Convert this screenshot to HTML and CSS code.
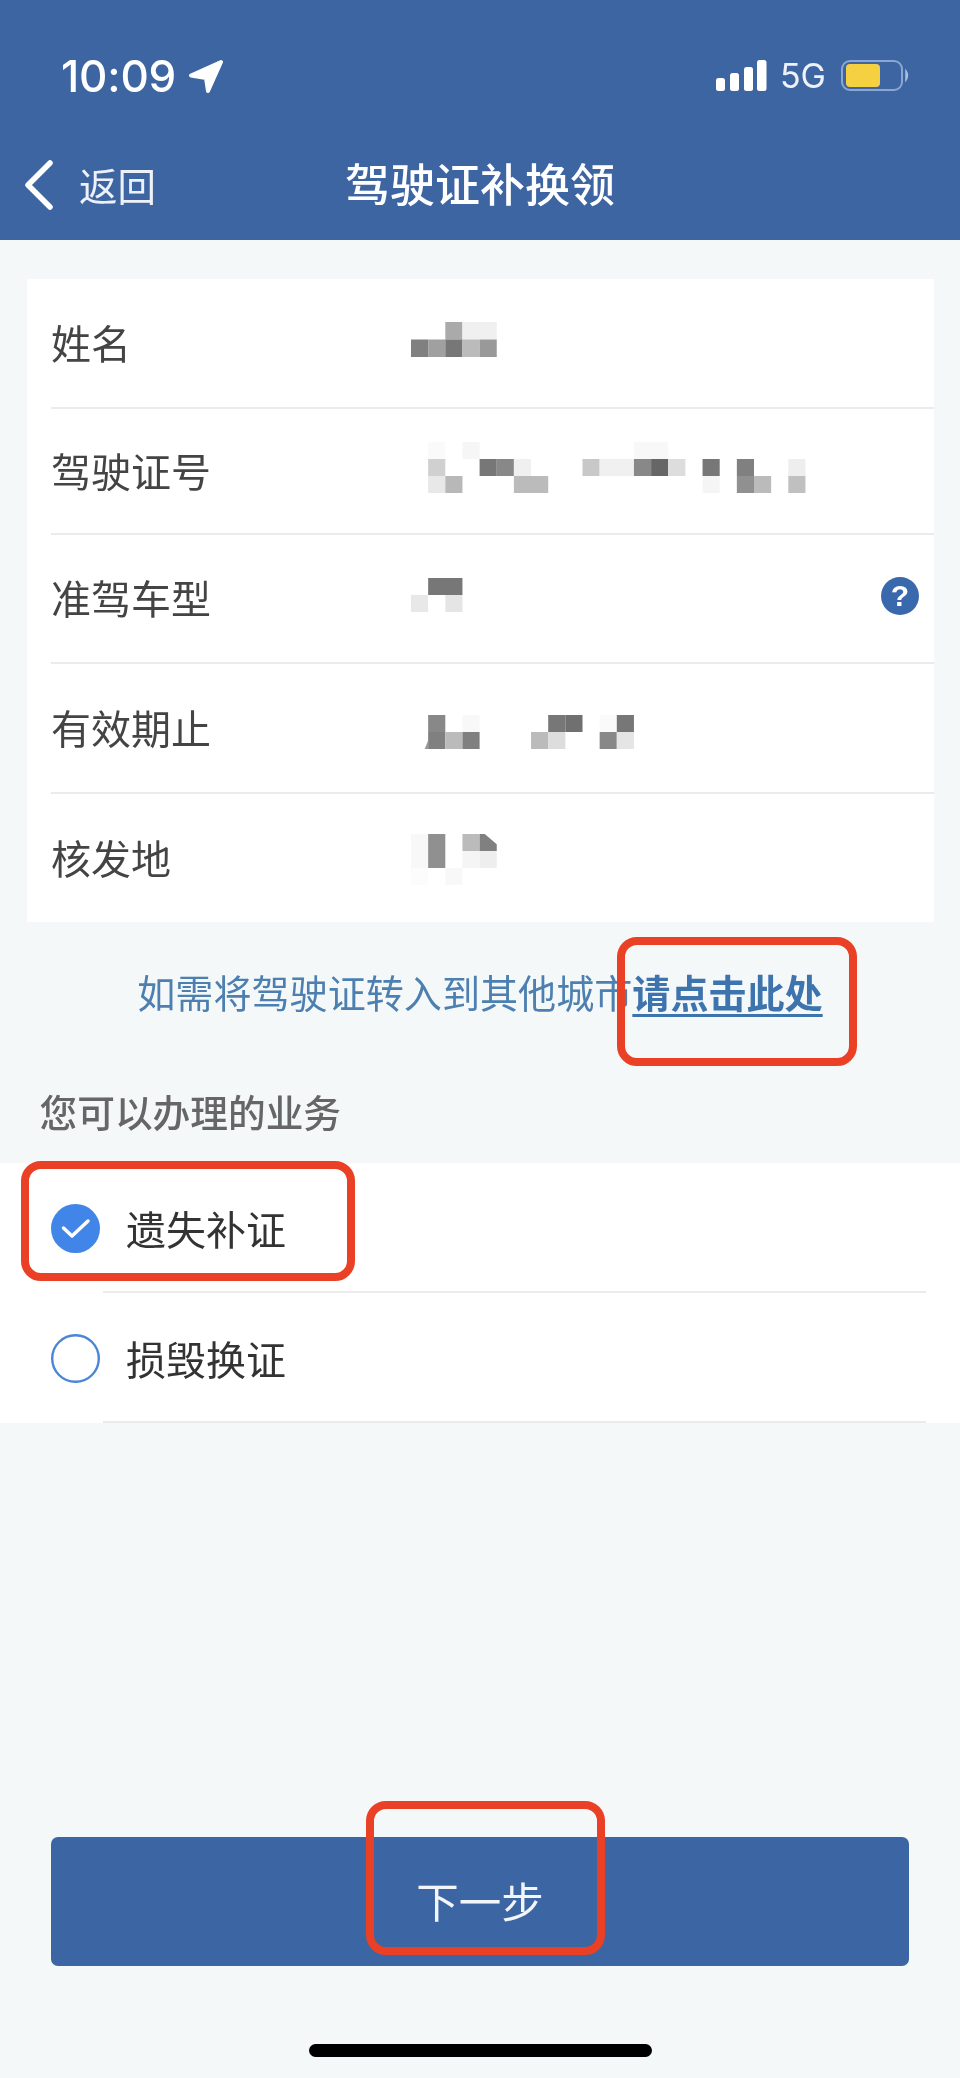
FILE: index.html
```html
<!DOCTYPE html>
<html lang="zh-CN">
<head>
<meta charset="utf-8">
<title>驾驶证补换领</title>
<link rel="stylesheet" href="styles.css">
</head>
<body>
<div class="page">
  <header class="header">
    <div class="status">
      <div class="status-left">
        <span class="time">10:09</span>
        <svg class="loc" viewBox="0 0 35 33"><path d="M33 2 3 15.500 18 18 20 31Z" fill="#fff" stroke="#fff" stroke-width="4" stroke-linejoin="round"/></svg>
      </div>
      <div class="status-right">
        <svg class="signal" viewBox="0 0 51 32"><rect x="0" y="18" width="9" height="13" rx="2.500"/><rect x="14" y="13" width="9" height="18" rx="2.500"/><rect x="28" y="7" width="9" height="24" rx="2.500"/><rect x="41" y="0" width="9.500" height="31" rx="2.500"/></svg>
        <span class="net">5G</span>
        <svg class="battery" viewBox="0 0 70 32"><rect x="1" y="1" width="60" height="29" rx="8" fill="none" stroke="#8ba6d0" stroke-width="2"/><rect x="5" y="4" width="34" height="23" rx="4" fill="#f5d142"/><path d="M65 11q3 4.500 0 9z" fill="#a9bedd" stroke="#a9bedd" stroke-width="1.500"/></svg>
      </div>
    </div>
    <nav class="nav">
      <div class="back">
        <svg class="chevron" viewBox="0 0 30 50"><path d="M26 3 4 25l22 22" fill="none" stroke="#fff" stroke-width="5.500" stroke-linecap="round" stroke-linejoin="round"/></svg>
        <span>返回</span>
      </div>
      <div class="title">驾驶证补换领</div>
      <div></div>
    </nav>
  </header>

  <main>
    <section class="card">
      <div class="row row-name">
        <span class="label">姓名</span>
        <svg class="mosaic" viewBox="0 0 440 126"><g transform="translate(0 43) scale(17.150 17.500)"><rect x="2" y="0" width="1" height="1" fill="#aaa"/><rect x="3" y="0" width="2" height="1" fill="#f0f0f0"/><rect x="0" y="1" width="1" height="1" fill="#808080"/><rect x="1" y="1" width="1" height="1" fill="#a0a0a0"/><rect x="2" y="1" width="1" height="1" fill="#777"/><rect x="3" y="1" width="1" height="1" fill="#bbb"/><rect x="4" y="1" width="1" height="1" fill="#999"/></g></svg>
      </div>
      <div class="row row-number">
        <span class="label">驾驶证号</span>
        <svg class="mosaic" viewBox="0 0 440 126"><g transform="translate(0 33) scale(17.150 17)"><rect x="1" y="0" width="1" height="1" fill="#fafafa"/><rect x="3" y="0" width="1" height="1" fill="#f6f6f6"/><rect x="13" y="0" width="2" height="1" fill="#f8f8f8"/><rect x="1" y="1" width="1" height="1" fill="#d0d0d0"/><rect x="4" y="1" width="1" height="1" fill="#777"/><rect x="5" y="1" width="1" height="1" fill="#888"/><rect x="6" y="1" width="1" height="1" fill="#f0f0f0"/><rect x="10" y="1" width="1" height="1" fill="#c8c8c8"/><rect x="11" y="1" width="2" height="1" fill="#f0f0f0"/><rect x="13" y="1" width="1" height="1" fill="#888"/><rect x="14" y="1" width="1" height="1" fill="#666"/><rect x="15" y="1" width="1" height="1" fill="#ddd"/><rect x="17" y="1" width="1" height="1" fill="#777"/><rect x="19" y="1" width="1" height="1" fill="#808080"/><rect x="22" y="1" width="1" height="1" fill="#eee"/><rect x="1" y="2" width="1" height="1" fill="#e8e8e8"/><rect x="2" y="2" width="1" height="1" fill="#b8b8b8"/><rect x="6" y="2" width="2" height="1" fill="#bbb"/><rect x="17" y="2" width="1" height="1" fill="#f5f5f5"/><rect x="19" y="2" width="1" height="1" fill="#909090"/><rect x="20" y="2" width="1" height="1" fill="#bbb"/><rect x="22" y="2" width="1" height="1" fill="#c0c0c0"/></g></svg>
      </div>
      <div class="row row-type">
        <span class="label">准驾车型</span>
        <svg class="mosaic" viewBox="0 0 440 126"><g transform="translate(0 43) scale(17.150 17)"><rect x="1" y="0" width="2" height="1" fill="#777"/><rect x="0" y="1" width="1" height="1" fill="#e8e8e8"/><rect x="2" y="1" width="1" height="1" fill="#e5e5e5"/></g></svg>
        <span class="help">?</span>
      </div>
      <div class="row row-date">
        <span class="label">有效期止</span>
        <svg class="mosaic" viewBox="0 0 440 126"><g transform="translate(0 51) scale(17.150 17)"><path d="M.8 2 1 1.500V2z" fill="#999"/><rect x="1" y="0" width="1" height="1" fill="#888"/><rect x="3" y="0" width="1" height="1" fill="#f8f8f8"/><rect x="8" y="0" width="1" height="1" fill="#777"/><rect x="9" y="0" width="1" height="1" fill="#707070"/><rect x="11" y="0" width="1" height="1" fill="#fafafa"/><rect x="12" y="0" width="1" height="1" fill="#777"/><rect x="1" y="1" width="1" height="1" fill="#808080"/><rect x="2" y="1" width="1" height="1" fill="#bbb"/><rect x="3" y="1" width="1" height="1" fill="#808080"/><rect x="7" y="1" width="1" height="1" fill="#bbb"/><rect x="8" y="1" width="1" height="1" fill="#ddd"/><rect x="11" y="1" width="1" height="1" fill="#888"/><rect x="12" y="1" width="1" height="1" fill="#e5e5e5"/></g></svg>
      </div>
      <div class="row row-place">
        <span class="label">核发地</span>
        <svg class="mosaic" viewBox="0 0 440 126"><g transform="translate(0 40) scale(17.150 17)"><rect x="0" y="0" width="1" height="2" fill="#f8f8f8"/><rect x="1" y="0" width="1" height="2" fill="#909090"/><rect x="3" y="0" width="1" height="1" fill="#bbb"/><path d="M4 0h.300l.700 .600v.400h-1z" fill="#808080"/><rect x="3" y="1" width="1" height="1" fill="#f5f5f5"/><rect x="4" y="1" width="1" height="1" fill="#eee"/><rect x="0" y="2" width="1" height="1" fill="#fcfcfc"/><rect x="2" y="2" width="1" height="1" fill="#f8f8f8"/></g></svg>
      </div>
    </section>

    <p class="notice">如需将驾驶证转入到其他城市<a class="notice-link" href="#">请点击此处</a></p>

    <h2 class="section-title">您可以办理的业务</h2>

    <section class="options">
      <div class="option">
        <svg class="radio" viewBox="0 0 49 49"><circle cx="24.500" cy="24.500" r="24.500" fill="#4285e8"/><path d="M12.500 24 21 32l16-15" fill="none" stroke="#fff" stroke-width="3.500" stroke-linecap="round" stroke-linejoin="round"/></svg>
        <span class="option-text">遗失补证</span>
      </div>
      <div class="option">
        <svg class="radio" viewBox="0 0 49 49"><circle cx="24.500" cy="24.500" r="23.300" fill="none" stroke="#4a86d6" stroke-width="2.400"/></svg>
        <span class="option-text">损毁换证</span>
      </div>
    </section>

    <button class="next" type="button">下一步</button>
    <div class="home-bar"></div>
  </main>

  <div class="mark mark-link"></div>
  <div class="mark mark-option"></div>
  <div class="mark mark-next"></div>
</div>
</body>
</html>
```
FILE: styles.css
```css
* { box-sizing: border-box; }

html, body {
  margin: 0;
  padding: 0;
  background: #f5f8f9;
}

body {
  font-family: "Noto Sans CJK SC", "Noto Sans", sans-serif;
}

.page {
  position: relative;
  width: 960px;
  height: 2078px;
  overflow: hidden;
  filter: blur(.5px);
}

/* header */
.header {
  height: 240px;
  background: #3d65a2;
  color: #fff;
}

.status {
  height: 130px;
  padding: 22px 49px 0 61px;
  display: flex;
  justify-content: space-between;
  align-items: center;
}

.status-left,
.status-right {
  display: flex;
  align-items: center;
}

.time {
  font-family: Inter, "Liberation Sans", sans-serif;
  font-size: 44px;
  font-weight: 500;
  letter-spacing: -.2px;
  line-height: 1;
}

.loc {
  width: 35px;
  height: 33px;
  margin-left: 12px;
}

.signal {
  width: 51px;
  height: 32px;
  fill: #fff;
}

.net {
  font-family: Inter, "Liberation Sans", sans-serif;
  font-size: 34px;
  font-weight: 400;
  line-height: 1;
  margin-left: 13px;
  color: #eef2f8;
}

.battery {
  width: 70px;
  height: 32px;
  margin-left: 15px;
}

.nav {
  height: 110px;
  display: grid;
  grid-template-columns: 1fr auto 1fr;
  align-items: center;
  padding-left: 24px;
}

.back {
  display: flex;
  align-items: center;
  font-size: 38.500px;
  line-height: 1;
  color: #eef2f8;
}

.back span {
  padding-bottom: 2px;
}

.chevron {
  width: 30px;
  height: 50px;
  margin-right: 25px;
}

.title {
  font-size: 45px;
  line-height: 1;
  font-weight: 500;
  margin-left: -24px;
  padding-bottom: 6px;
}

/* info card */
.card {
  margin: 39px 26px 0 27px;
  background: #fff;
  padding-left: 24px;
  display: flex;
  flex-direction: column;
}

.row {
  height: 129px;
  display: flex;
  align-items: center;
  border-bottom: 2px solid #e9ebed;
  position: relative;
}

.row-name { height: 130px; }
.row-number { height: 126px; }
.row-date { height: 130px; }
.row-place { height: 128px; }

.row:last-child {
  border-bottom: 0;
}

.label {
  width: 360px;
  font-size: 40px;
  line-height: 1;
  color: #444;
  padding-bottom: 3px;
}

.mosaic {
  align-self: flex-start;
  width: 440px;
  height: 126px;
}

.help {
  position: absolute;
  right: 15px;
  top: 42px;
  width: 38px;
  height: 38px;
  border-radius: 50%;
  background: #3a68ac;
  color: #fff;
  font-family: "Liberation Sans", sans-serif;
  font-size: 30px;
  font-weight: 700;
  line-height: 38px;
  text-align: center;
}

/* transfer notice */
.notice {
  margin: 38px 0 0;
  height: 64px;
  line-height: 64px;
  text-align: center;
  font-size: 38.100px;
  color: #4d80b0;
  white-space: nowrap;
}

.notice-link {
  color: #3d74ad;
  font-weight: 700;
  text-decoration: underline;
  text-underline-offset: 6px;
  text-decoration-thickness: 3px;
}

.section-title {
  margin: 62px 0 27px;
  padding-left: 39.500px;
  height: 50px;
  line-height: 50px;
  font-size: 37.700px;
  font-weight: 500;
  color: #666;
}

/* options */
.options {
  height: 260px;
  background: #fff;
  display: flex;
  flex-direction: column;
}

.option {
  flex: 1;
  position: relative;
  display: flex;
  align-items: center;
  padding-left: 51px;
}

.option::after {
  content: "";
  position: absolute;
  left: 103px;
  right: 34px;
  bottom: 0;
  height: 2px;
  background: #e9ebed;
}

.radio {
  width: 49px;
  height: 49px;
  margin-right: 26px;
}

.option-text {
  font-size: 40px;
  line-height: 1;
  color: #333;
}

/* action */
.next {
  display: block;
  width: 858px;
  height: 129px;
  margin: 414px 0 0 51px;
  border: 0;
  border-radius: 7px;
  background: #3c65a3;
  color: #f2f5fa;
  font-family: inherit;
  font-size: 42.500px;
  line-height: 1;
  padding: 0 0 3px;
}

.home-bar {
  width: 343px;
  height: 13px;
  margin: 78px 0 0 309px;
  border-radius: 7px;
  background: #000;
}

/* red annotation boxes */
.mark {
  position: absolute;
  border: 8px solid #ea4025;
  border-radius: 20px;
}

.mark-link {
  left: 617px;
  top: 937px;
  width: 240px;
  height: 129px;
}

.mark-option {
  left: 21px;
  top: 1161px;
  width: 334px;
  height: 120px;
}

.mark-next {
  left: 366px;
  top: 1801px;
  width: 239px;
  height: 154px;
}
```
